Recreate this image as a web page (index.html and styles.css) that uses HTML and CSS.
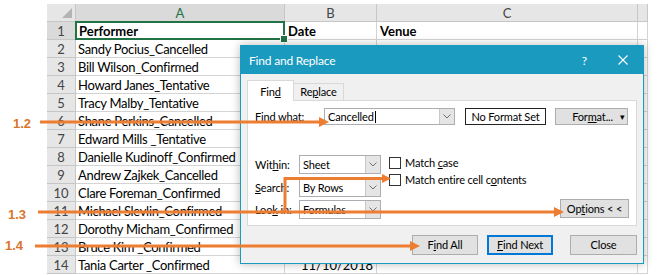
FILE: index.html
```html
<!DOCTYPE html>
<html lang="en">
<head>
    <meta charset="UTF-8">
    <title>Find and Replace</title>
    <link rel="stylesheet" href="styles.css">
</head>
<body>
    <div class="page">
        <!-- worksheet -->
        <div class="sheet">
            <div class="corner"><svg width="10" height="10" viewBox="0 0 10 10"><polygon points="10,0 10,10 0,10" fill="#b4b4b4"/></svg></div>
            <div class="col-head col-sel">A</div>
            <div class="col-head">B</div>
            <div class="col-head">C</div>
            <div class="col-head"></div>

            <div class="row-head row-sel">1</div>
            <div class="cell head active">Performer</div>
            <div class="cell head">Date</div>
            <div class="cell head">Venue</div>
            <div class="cell"></div>

            <div class="row-head">2</div>
            <div class="cell">Sandy Pocius_Cancelled</div>
            <div class="cell date"></div>
            <div class="cell"></div>
            <div class="cell"></div>

            <div class="row-head">3</div>
            <div class="cell">Bill Wilson_Confirmed</div>
            <div class="cell date">11/12/2018</div>
            <div class="cell"></div>
            <div class="cell"></div>

            <div class="row-head">4</div>
            <div class="cell">Howard Janes_Tentative</div>
            <div class="cell date">11/11/2018</div>
            <div class="cell"></div>
            <div class="cell"></div>

            <div class="row-head">5</div>
            <div class="cell">Tracy Malby_Tentative</div>
            <div class="cell date">11/11/2018</div>
            <div class="cell"></div>
            <div class="cell"></div>

            <div class="row-head">6</div>
            <div class="cell">Shane Perkins_Cancelled</div>
            <div class="cell date">11/11/2018</div>
            <div class="cell"></div>
            <div class="cell"></div>

            <div class="row-head">7</div>
            <div class="cell">Edward Mills _Tentative</div>
            <div class="cell date">11/11/2018</div>
            <div class="cell"></div>
            <div class="cell"></div>

            <div class="row-head">8</div>
            <div class="cell">Danielle Kudinoff_Confirmed</div>
            <div class="cell date">11/11/2018</div>
            <div class="cell"></div>
            <div class="cell"></div>

            <div class="row-head">9</div>
            <div class="cell">Andrew Zajkek_Cancelled</div>
            <div class="cell date">11/10/2018</div>
            <div class="cell"></div>
            <div class="cell"></div>

            <div class="row-head">10</div>
            <div class="cell">Clare Foreman_Confirmed</div>
            <div class="cell date">11/10/2018</div>
            <div class="cell"></div>
            <div class="cell"></div>

            <div class="row-head">11</div>
            <div class="cell">Michael Slevlin_Confirmed</div>
            <div class="cell date">11/10/2018</div>
            <div class="cell"></div>
            <div class="cell"></div>

            <div class="row-head">12</div>
            <div class="cell">Dorothy Micham_Confirmed</div>
            <div class="cell date">11/10/2018</div>
            <div class="cell"></div>
            <div class="cell"></div>

            <div class="row-head">13</div>
            <div class="cell">Bruce Kim _Confirmed</div>
            <div class="cell date">11/10/2018</div>
            <div class="cell"></div>
            <div class="cell"></div>

            <div class="row-head">14</div>
            <div class="cell">Tania Carter _Confirmed</div>
            <div class="cell date">11/10/2018</div>
            <div class="cell"></div>
            <div class="cell"></div>
        </div>

        <!-- Find and Replace dialog -->
        <div class="dialog">
            <div class="titlebar">
                <span class="title">Find and Replace</span>
                <span class="help">?</span>
                <svg class="close-x" width="10" height="10" viewBox="0 0 10 10"><path d="M0.5 0.5 L9.5 9.5 M9.5 0.5 L0.5 9.5" stroke="#fff" stroke-width="1.1"/></svg>
            </div>
            <div class="dlg-body">
                <div class="tabs">
                    <div class="tab tab-on">Fin<u>d</u></div>
                    <div class="tab">Re<u>p</u>lace</div>
                </div>
                <div class="panel">
                    <div class="find-row">
                        <span class="find-label">Find what:</span>
                        <div class="combo combo-find">
                            <span class="combo-text">Cancelled<span class="caret"></span></span>
                            <span class="drop"><svg width="8" height="5" viewBox="0 0 8 5"><path d="M0.5 0.5 L4 4 L7.5 0.5" fill="none" stroke="#707070"/></svg></span>
                        </div>
                        <div class="fmt-set">No Format Set</div>
                        <div class="btn btn-fmt"><span>For<u>m</u>at...</span><span class="tri">&#9662;</span></div>
                    </div>

                    <div class="opts">
                        <div class="sel-list">
                            <div class="sel-row">
                                <span class="sel-label">Wit<u>h</u>in:</span>
                                <div class="combo">
                                    <span class="combo-text">Sheet</span>
                                    <span class="drop"><svg width="8" height="5" viewBox="0 0 8 5"><path d="M0.5 0.5 L4 4 L7.5 0.5" fill="none" stroke="#707070"/></svg></span>
                                </div>
                            </div>
                            <div class="sel-row">
                                <span class="sel-label"><u>S</u>earch:</span>
                                <div class="combo">
                                    <span class="combo-text">By Rows</span>
                                    <span class="drop"><svg width="8" height="5" viewBox="0 0 8 5"><path d="M0.5 0.5 L4 4 L7.5 0.5" fill="none" stroke="#707070"/></svg></span>
                                </div>
                            </div>
                            <div class="sel-row">
                                <span class="sel-label">Loo<u>k</u> in:</span>
                                <div class="combo">
                                    <span class="combo-text">Formulas</span>
                                    <span class="drop"><svg width="8" height="5" viewBox="0 0 8 5"><path d="M0.5 0.5 L4 4 L7.5 0.5" fill="none" stroke="#707070"/></svg></span>
                                </div>
                            </div>
                        </div>
                        <div class="checks">
                            <div class="check"><span class="box"></span><span>Match <u>c</u>ase</span></div>
                            <div class="check"><span class="box"></span><span>Match entire cell c<u>o</u>ntents</span></div>
                        </div>
                        <div class="btn btn-opt">Op<u>t</u>ions &lt; &lt;</div>
                    </div>
                </div>
                <div class="actions">
                    <div class="btn btn-act">F<u>i</u>nd All</div>
                    <div class="btn btn-act btn-default"><u>F</u>ind Next</div>
                    <div class="btn btn-act btn-close">Close</div>
                </div>
            </div>
        </div>

        <!-- step callouts -->
        <svg class="callouts" width="664" height="275" viewBox="0 0 664 275">
            <g fill="#d9742b" font-family="'Liberation Sans', Arial, sans-serif" font-weight="bold" font-size="13">
                <text x="13" y="128">1.2</text>
                <text x="8" y="219">1.3</text>
                <text x="5" y="250">1.4</text>
            </g>
            <g stroke="#ed7d31" stroke-width="3" fill="none">
                <path d="M40 122 H321"/>
                <path d="M38 212 H556"/>
                <path d="M285 212 V178.5 H384"/>
                <path d="M35 246 H412"/>
            </g>
            <g fill="#ed7d31">
                <polygon points="319,117 329,122 319,127"/>
                <polygon points="554,207 564,212 554,217"/>
                <polygon points="382,174 391,178.5 382,183"/>
                <polygon points="410,241 420,246 410,251"/>
            </g>
        </svg>
    </div>
</body>
</html>
```

FILE: styles.css
```css
/* page */
* {
    box-sizing: border-box;
}

body {
    margin: 0;
    background: #fff;
    font-family: Lato, 'Liberation Sans', sans-serif;
}

.page {
    position: relative;
    width: 664px;
    height: 275px;
    overflow: hidden;
    padding: 4px 0 0 47px;
}

/* worksheet grid */
.sheet {
    display: grid;
    grid-template-columns: 29px 209px 92px 261px 10px;
    grid-auto-rows: 18px;
    font-size: 13px;
    letter-spacing: -0.3px;
    color: #000;
}

.sheet > div {
    border-right: 1px solid #d4d4d4;
    border-bottom: 1px solid #d4d4d4;
    white-space: nowrap;
    overflow: hidden;
    line-height: 18px;
}

.corner {
    background: #e6e6e6;
    display: flex;
    align-items: flex-end;
    justify-content: flex-end;
    padding: 0 3px 3px 0;
}

.sheet > .corner,
.sheet > .col-head,
.sheet > .row-head {
    border-color: #c6c6c6;
}

.col-head,
.row-head {
    background: #e6e6e6;
    color: #444;
    text-align: center;
    font-size: 13px;
    letter-spacing: 0;
}

.col-head.col-sel {
    background: #dadada;
    color: #217346;
}

.row-head.row-sel {
    background: #dadada;
}

.cell {
    padding-left: 2px;
}

.cell.head {
    font-weight: bold;
    padding-left: 3px;
    letter-spacing: 0;
}

.cell.date {
    text-align: right;
    padding-right: 3px;
    letter-spacing: 0;
}

.sheet > .cell.active {
    position: relative;
    overflow: visible;
    z-index: 1;
}

.cell.active::before {
    content: '';
    position: absolute;
    left: -1px;
    top: -1px;
    right: -1px;
    bottom: -1px;
    border: 2px solid #217346;
}

.cell.active::after {
    content: '';
    position: absolute;
    right: -4px;
    bottom: -4px;
    width: 6px;
    height: 6px;
    background: #217346;
    border: 1px solid #fff;
}

/* dialog */
.dialog {
    position: absolute;
    left: 240px;
    top: 45px;
    width: 404px;
    height: 219px;
    border: 1px solid #1b9ac0;
    background: #f0f0f0;
    box-shadow: 0 0 9px rgba(0, 0, 0, 0.28);
    font-family: Lato, 'Liberation Sans', sans-serif;
    font-size: 11px;
    letter-spacing: -0.15px;
    color: #000;
    display: flex;
    flex-direction: column;
    z-index: 2;
}

.titlebar {
    height: 28px;
    flex: none;
    background: #1b9ac0;
    color: #fff;
    display: flex;
    align-items: center;
    padding: 0 15px 0 8px;
    font-size: 12px;
    letter-spacing: -0.2px;
}

.title {
    flex: 1;
}

.help {
    margin-right: 31px;
}

.dlg-body {
    flex: 1;
    display: flex;
    flex-direction: column;
    padding: 6px 6px 7px 6px;
}

.tabs {
    display: flex;
    align-items: flex-end;
    height: 20px;
}

.tab {
    height: 17px;
    width: 50px;
    border: 1px solid #d9d9d9;
    border-bottom: none;
    border-left: none;
    text-align: center;
    line-height: 16px;
}

.tab.tab-on {
    position: relative;
    z-index: 1;
    width: 47px;
    height: 21px;
    margin-bottom: -1px;
    background: #fff;
    border-left: 1px solid #d9d9d9;
    line-height: 22px;
}

.panel {
    height: 126px;
    background: #fff;
    border: 1px solid #d9d9d9;
    padding: 7px 7px 0 7px;
}

.find-row {
    display: flex;
    align-items: center;
    height: 17px;
}

.find-label {
    width: 69px;
}

.combo {
    display: flex;
    width: 82px;
    height: 19px;
    border: 1px solid #abadb3;
    background: #fff;
}

.combo-text {
    flex: 1;
    padding-left: 3px;
    line-height: 17px;
    white-space: nowrap;
}

.combo .drop {
    width: 15px;
    background: #e5e5e5;
    border-left: 1px solid #c8c8c8;
    display: flex;
    align-items: center;
    justify-content: center;
}

.combo.combo-find {
    width: 131px;
    height: 17px;
}

.combo.combo-find .combo-text {
    line-height: 15px;
}

.caret {
    display: inline-block;
    width: 1px;
    height: 12px;
    background: #000;
    vertical-align: -2px;
    margin-left: 1px;
}

.fmt-set {
    margin-left: 10px;
    width: 81px;
    height: 17px;
    border: 1px solid #222;
    text-align: center;
    line-height: 15px;
}

.btn {
    background: #e1e1e1;
    border: 1px solid #adadad;
    text-align: center;
    white-space: nowrap;
}

.btn-fmt {
    margin-left: 9px;
    width: 73px;
    height: 17px;
    line-height: 15px;
    padding-left: 14px;
    display: flex;
    justify-content: center;
    gap: 7px;
}

.tri {
    font-size: 9px;
}

/* options area */
.opts {
    display: flex;
    margin-top: 30px;
}

.sel-list {
    display: flex;
    flex-direction: column;
    gap: 3.5px;
}

.sel-row {
    display: flex;
    align-items: center;
}

.sel-label {
    width: 44px;
}

.checks {
    margin-left: 8px;
    margin-top: -1px;
}

.check {
    display: flex;
    align-items: center;
    height: 17px;
}

.box {
    width: 12px;
    height: 12px;
    border: 1px solid #333;
    background: #fff;
    margin-right: 4px;
}

.btn-opt {
    margin-left: auto;
    align-self: flex-end;
    margin-bottom: 1px;
    width: 69px;
    height: 19px;
    line-height: 17px;
}

/* bottom buttons */
.actions {
    display: flex;
    justify-content: flex-end;
    margin-top: 9px;
}

.btn-act {
    width: 66px;
    height: 20px;
    line-height: 18px;
}

.btn-act + .btn-act {
    margin-left: 9px;
}

.btn-act.btn-close {
    width: 67px;
    margin-left: 17px;
}

.btn-default {
    border-color: #0078d7;
    box-shadow: inset 0 0 0 1px #0078d7;
}

/* annotation overlay */
.callouts {
    position: absolute;
    left: 0;
    top: 0;
    z-index: 3;
    pointer-events: none;
}
```
